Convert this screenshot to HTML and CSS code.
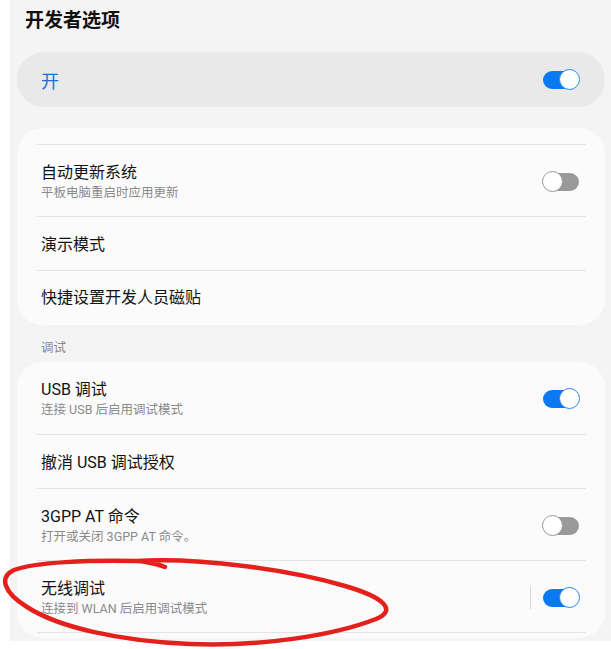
FILE: index.html
```html
<!DOCTYPE html>
<html lang="zh-CN">
<head>
<meta charset="utf-8">
<title>开发者选项</title>
<link rel="stylesheet" href="styles.css">
</head>
<body>
<div class="screen">
  <h1 class="title">开发者选项</h1>
  <div class="master">
    <span class="master-label">开</span>
    <span class="switch on"><span class="thumb"></span></span>
  </div>

  <div class="card card-top">
    <div class="cut"></div>
    <div class="row two">
      <div class="text">
        <div class="name">自动更新系统</div>
        <div class="sub">平板电脑重启时应用更新</div>
      </div>
      <span class="switch off"><span class="thumb"></span></span>
    </div>
    <div class="row one">
      <div class="text"><div class="name">演示模式</div></div>
    </div>
    <div class="row one last">
      <div class="text"><div class="name">快捷设置开发人员磁贴</div></div>
    </div>
  </div>

  <div class="section">调试</div>

  <div class="card card-debug">
    <div class="row two first">
      <div class="text">
        <div class="name">USB 调试</div>
        <div class="sub">连接 USB 后启用调试模式</div>
      </div>
      <span class="switch on"><span class="thumb"></span></span>
    </div>
    <div class="row one">
      <div class="text"><div class="name">撤消 USB 调试授权</div></div>
    </div>
    <div class="row two">
      <div class="text">
        <div class="name">3GPP AT 命令</div>
        <div class="sub">打开或关闭 3GPP AT 命令。</div>
      </div>
      <span class="switch off"><span class="thumb"></span></span>
    </div>
    <div class="row two">
      <div class="text">
        <div class="name">无线调试</div>
        <div class="sub">连接到 WLAN 后启用调试模式</div>
      </div>
      <span class="vbar"></span>
      <span class="switch on"><span class="thumb"></span></span>
    </div>
    <div class="row tail"></div>
  </div>
</div>
<svg class="scribble" width="611" height="649" viewBox="0 0 611 649">
  <path d="M165 567 C155 563 140 561 136 561 C200 557 290 570 345 586 C383 597 398 610 376 619 C335 635 262 647 190 644 C118 641 58 627 27 607 C3 592 -1 577 14 570 C35 562 90 560 136 561" fill="none" stroke="#e3201c" stroke-width="4.5" stroke-linecap="round" stroke-linejoin="round"/>
</svg>
</body>
</html>
```

FILE: styles.css
```css
html, body {
  margin: 0;
  padding: 0;
  background: #ffffff;
}
body {
  position: relative;
  width: 611px;
  height: 649px;
  overflow: hidden;
  font-family: "Roboto", "Noto Sans CJK SC", sans-serif;
  color: #111111;
}
.screen {
  margin-left: 10px;
  width: 601px;
  height: 641px;
  background: #f4f4f4;
  overflow: hidden;
  display: flex;
  flex-direction: column;
}
.title {
  margin: 0;
  padding: 8px 0 0 15px;
  height: 45px;
  box-sizing: border-box;
  font-size: 19px;
  line-height: 26px;
  font-weight: 700;
  color: #111111;
}
.master {
  margin: 7px 6px 0 7px;
  height: 55px;
  border-radius: 27px;
  background: #e9e9e9;
  display: flex;
  align-items: center;
  justify-content: space-between;
  padding: 0 26px 0 24px;
}
.master-label {
  font-size: 18px;
  color: #1470d8;
}
.card {
  margin: 0 6px 0 7px;
  background: #fbfbfb;
  border-radius: 26px;
  padding: 0 19px 0 20px;
}
.card-top {
  margin-top: 21px;
}
.cut {
  height: 16px;
}
.row {
  display: flex;
  align-items: center;
  border-top: 1px solid #e4e4e4;
  padding: 2px 7px 0 4px;
  box-sizing: border-box;
}
.row.first {
  border-top: none;
}
.row.two {
  height: 72px;
}
.row.one {
  height: 54px;
}
.row.last {
  height: 55px;
  padding-top: 0;
}
.row.tail {
  height: 6px;
}
.text {
  flex: 1;
}
.name {
  font-size: 16px;
  line-height: 20px;
  color: #121212;
}
.sub {
  font-size: 12.5px;
  line-height: 16px;
  margin-top: 2px;
  color: #8a8a8a;
}
.section {
  height: 37px;
  padding: 15px 0 0 31px;
  box-sizing: border-box;
  font-size: 12.5px;
  line-height: 16px;
  color: #8a8a8a;
}
.card-debug {
  flex: none;
}
.switch {
  position: relative;
  width: 36px;
  height: 18px;
  border-radius: 9px;
  flex: none;
}
.switch .thumb {
  position: absolute;
  top: -2px;
  width: 19px;
  height: 19px;
  border-radius: 50%;
  background: #ffffff;
}
.switch.on {
  background: #0b7af2;
}
.switch.on .thumb {
  right: -1px;
  border: 1.5px solid #2a86f0;
}
.switch.off {
  background: #999999;
}
.switch.off .thumb {
  left: -1px;
  border: 1.5px solid #9a9a9a;
}
.vbar {
  width: 1px;
  height: 22px;
  background: #d6d6d6;
  margin-right: 12px;
}
.scribble {
  position: absolute;
  left: 0;
  top: 0;
  pointer-events: none;
}
```
